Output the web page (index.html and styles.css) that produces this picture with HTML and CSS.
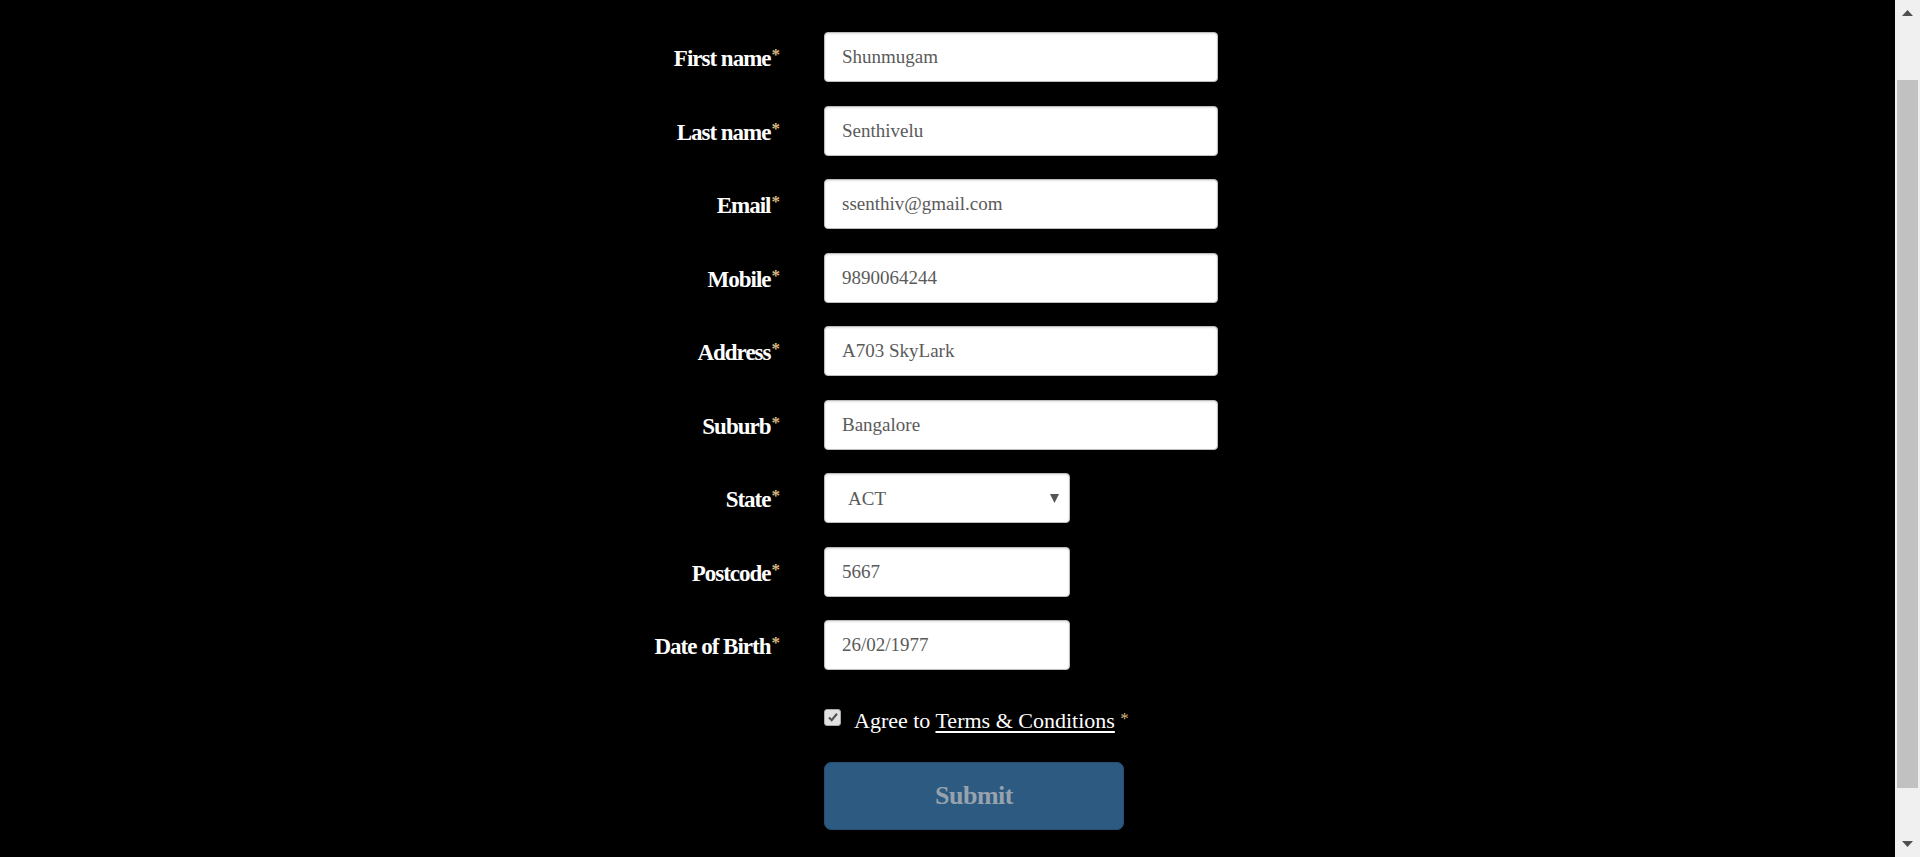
FILE: index.html
```html
<!DOCTYPE html>
<html lang="en">
<head>
<meta charset="utf-8">
<title>Registration</title>
<link rel="stylesheet" href="styles.css">
</head>
<body>
<div class="viewport">
  <form class="form">
    <div class="row">
      <label class="label" for="fn">First name<span class="req">*</span></label>
      <input class="field" id="fn" type="text" value="Shunmugam">
    </div>
    <div class="row">
      <label class="label" for="ln">Last name<span class="req">*</span></label>
      <input class="field" id="ln" type="text" value="Senthivelu">
    </div>
    <div class="row">
      <label class="label" for="em">Email<span class="req">*</span></label>
      <input class="field" id="em" type="text" value="ssenthiv@gmail.com">
    </div>
    <div class="row">
      <label class="label" for="mo">Mobile<span class="req">*</span></label>
      <input class="field" id="mo" type="text" value="9890064244">
    </div>
    <div class="row">
      <label class="label" for="ad">Address<span class="req">*</span></label>
      <input class="field" id="ad" type="text" value="A703 SkyLark">
    </div>
    <div class="row">
      <label class="label" for="su">Suburb<span class="req">*</span></label>
      <input class="field" id="su" type="text" value="Bangalore">
    </div>
    <div class="row">
      <label class="label" for="st">State<span class="req">*</span></label>
      <select class="field field-short select" id="st">
        <option>ACT</option>
        <option>NSW</option>
        <option>VIC</option>
      </select>
    </div>
    <div class="row">
      <label class="label" for="pc">Postcode<span class="req">*</span></label>
      <input class="field field-short" id="pc" type="text" value="5667">
    </div>
    <div class="row">
      <label class="label" for="db">Date of Birth<span class="req">*</span></label>
      <input class="field field-short" id="db" type="text" value="26/02/1977">
    </div>
    <div class="row row-agree">
      <span></span>
      <label class="agree">
        <input class="check" type="checkbox" checked>
        <span>Agree to <a class="terms" href="#">Terms &amp; Conditions</a> <span class="req-small">*</span></span>
      </label>
    </div>
    <div class="row row-submit">
      <span></span>
      <button class="submit" type="button">Submit</button>
    </div>
  </form>
</div>
<div class="scrollbar">
  <div class="sb-btn">
    <svg width="11" height="6" viewBox="0 0 11 6"><polygon points="5.5,0 11,6 0,6" fill="#505050"/></svg>
  </div>
  <div class="sb-track"><div class="sb-thumb"></div></div>
  <div class="sb-btn sb-btn-down">
    <svg width="11" height="6" viewBox="0 0 11 6"><polygon points="0,0 11,0 5.5,6" fill="#505050"/></svg>
  </div>
</div>
</body>
</html>
```

FILE: styles.css
```css
html, body {
  margin: 0;
  padding: 0;
  height: 100%;
  overflow: hidden;
  background: #000;
}

body {
  display: flex;
  font-family: "Liberation Serif", "Times New Roman", serif;
}

.viewport {
  flex: 1;
  min-width: 0;
  padding-top: 32px;
}

.form {
  width: 621px;
  margin: 0 auto;
  display: flex;
  flex-direction: column;
  gap: 23.5px;
}

.row {
  display: grid;
  grid-template-columns: 143px 394px;
  column-gap: 44px;
  align-items: center;
}

.label {
  text-align: right;
  color: #fff;
  font-weight: bold;
  font-size: 23px;
  letter-spacing: -1px;
  padding-top: 3px;
  white-space: nowrap;
}

.req {
  color: #d9b77f;
  font-size: 17px;
  letter-spacing: 0;
  vertical-align: 6px;
  margin-left: 1px;
}

.field {
  box-sizing: border-box;
  width: 394px;
  height: 50px;
  margin: 0;
  padding: 0 17px;
  border: 1px solid #bdbdbd;
  border-radius: 4px;
  background: #fff;
  box-shadow: inset 0 1px 2px rgba(0, 0, 0, 0.12);
  font-family: "Liberation Serif", "Times New Roman", serif;
  font-size: 19px;
  color: #5a5a5a;
  outline: none;
}

.field-short {
  width: 246px;
}

.select {
  -webkit-appearance: none;
  appearance: none;
  padding-left: 23px;
  background: #fff url("data:image/svg+xml,%3Csvg xmlns='http://www.w3.org/2000/svg' width='9' height='9' viewBox='0 0 9 9'%3E%3Cpolygon points='0,0 9,0 4.5,9' fill='%23555'/%3E%3C/svg%3E") no-repeat right 10px center;
}

.row-agree {
  margin-top: 12px;
  align-items: start;
}

.agree {
  display: flex;
  align-items: flex-start;
  gap: 13px;
  color: #fff;
  font-size: 22px;
  line-height: 26px;
  white-space: nowrap;
}

.check {
  -webkit-appearance: none;
  appearance: none;
  box-sizing: border-box;
  width: 17px;
  height: 17px;
  margin: 3px 0 0 0;
  border: 1px solid #a9a9a9;
  border-radius: 3px;
  background: #e2e2e2 url("data:image/svg+xml,%3Csvg xmlns='http://www.w3.org/2000/svg' width='12' height='12' viewBox='0 0 12 12'%3E%3Cpath d='M2 6.5 L4.7 9.2 L10 2.8' stroke='%23555' stroke-width='2.2' fill='none'/%3E%3C/svg%3E") no-repeat center;
}

.terms {
  color: #fff;
  text-decoration: underline;
  text-underline-offset: 3px;
}

.req-small {
  color: #d9b77f;
  font-size: 17px;
  vertical-align: 4px;
}

.row-submit {
  margin-top: 5px;
}

.submit {
  width: 300px;
  height: 68px;
  margin: 0;
  border: 1px solid #254f72;
  border-radius: 7px;
  background: #2c5a80;
  color: #97a2ad;
  font-family: "Liberation Serif", "Times New Roman", serif;
  font-size: 26px;
  font-weight: bold;
  letter-spacing: -0.5px;
  cursor: pointer;
}

.scrollbar {
  width: 25px;
  flex: none;
  background: #f0f0f0;
  display: flex;
  flex-direction: column;
  height: 100%;
}

.sb-btn {
  height: 25px;
  display: flex;
  justify-content: center;
  padding-top: 10px;
  box-sizing: border-box;
}

.sb-btn-down {
  padding-top: 9px;
}

.sb-track {
  flex: 1;
  padding: 55px 2px 0 2px;
}

.sb-thumb {
  height: 708px;
  background: #c1c1c1;
}
```
